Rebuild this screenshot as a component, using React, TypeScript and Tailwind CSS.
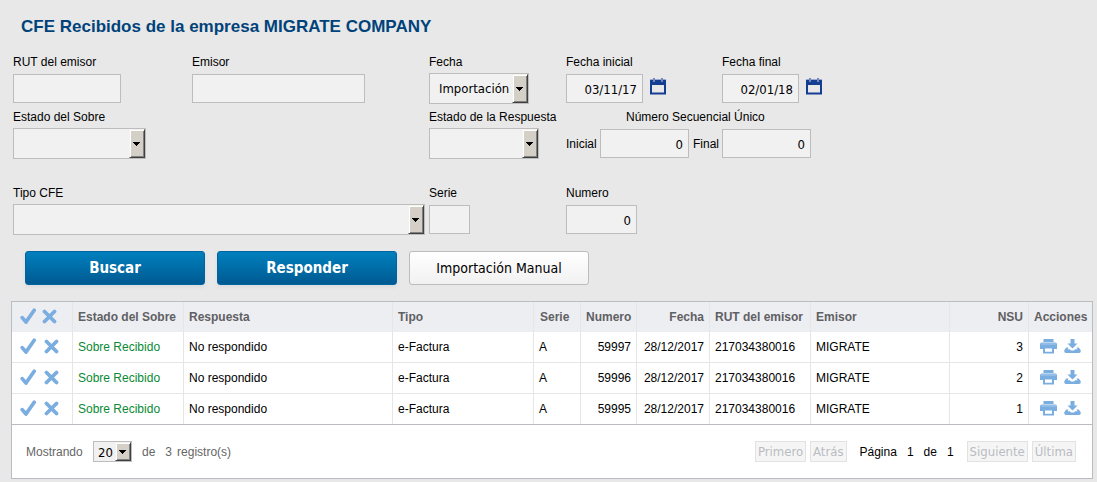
import type { ReactNode } from "react";

const formFont = "font-['Tahoma','DejaVu_Sans_Condensed','Noto_Sans',sans-serif]";
const inputStyle =
  "block h-[29px] border border-[#bdbdbd] bg-[#f1f1f1] px-[5px] pt-px text-[13px] text-black outline-none";

function Field({ id, label, className = "", children }: { id: string; label: string; className?: string; children: ReactNode }) {
  return (
    <div className={className}>
      <label htmlFor={id} className="block h-5 whitespace-nowrap leading-[18px]">
        {label}
      </label>
      <div className="flex h-[31px] items-center">{children}</div>
    </div>
  );
}

function Arrow() {
  return (
    <span className="pointer-events-none absolute inset-y-px right-px flex w-4 items-center justify-center border border-t-[#f4f2ee] border-l-[#f4f2ee] border-r-[#404040] border-b-[#404040] bg-[#d4d0c8] pr-px shadow-[inset_1px_1px_0_#ffffff,inset_-1px_-1px_0_#808080]">
      <svg width="7" height="4" viewBox="0 0 7 4" shapeRendering="crispEdges">
        <path d="M0 0h7v1H6v1H5v1H4v1H3V3H2V2H1V1H0z" fill="#000" />
      </svg>
    </span>
  );
}

function Select({ id, options, className, label }: { id: string; options: string[]; className: string; label?: string }) {
  return (
    <span className={`relative block ${className}`}>
      <select
        id={id}
        aria-label={label}
        className={`${formFont} block h-full w-full appearance-none rounded-none border border-[#bdbdbd] bg-[#f1f1f1] pt-px pr-4 text-[13px] text-black outline-none ${label ? "pl-1" : "pl-[9px]"}`}
      >
        {options.map((o) => (
          <option key={o}>{o}</option>
        ))}
      </select>
      <Arrow />
    </span>
  );
}

function CalendarButton({ label }: { label: string }) {
  return (
    <button type="button" aria-label={label} className="ml-[7px] -mt-1">
      <svg width="16" height="17" viewBox="0 0 16 17" className="block">
        <path d="M0 2h16v14.5H0zM2 7v7.5h12V7z" fill="#153d92" fillRule="evenodd" />
        <path d="M0 1h16v1H0z" fill="#9aa9cc" />
        <path d="M3 0h2v4H3zM11 0h2v4h-2z" fill="#7489bd" />
      </svg>
    </button>
  );
}

function CheckIcon() {
  return (
    <svg width="17" height="17" viewBox="0 0 17 17" className="block">
      <path d="M2.2 9.6 6 14 14.2 2.2" fill="none" stroke="#7aade0" strokeWidth="3.7" strokeLinecap="round" strokeLinejoin="round" />
    </svg>
  );
}

function CrossIcon() {
  return (
    <svg width="15" height="15" viewBox="0 0 15 15" className="block">
      <path d="M2.5 2.5 12.5 12.5M12.5 2.5 2.5 12.5" fill="none" stroke="#7aade0" strokeWidth="3.8" strokeLinecap="round" />
    </svg>
  );
}

function PrintIcon() {
  return (
    <svg width="17" height="15" viewBox="0 0 17 15" className="block">
      <path d="M3.5 0h10v3h-10z" fill="#7aade0" />
      <path d="M1.8 3.6h13.4Q17 3.8 17 5.5V10h-3V8H3v2H0V5.5Q0 3.8 1.8 3.6z" fill="#7aade0" />
      <path d="M.8 4.4h15.4v1.1H.8z" fill="#a5c9ec" />
      <path d="M3 8h11v6.5H3zM5 9.5v3.3h7V9.5z" fill="#7aade0" fillRule="evenodd" />
    </svg>
  );
}

function DownloadIcon() {
  return (
    <svg width="17" height="15" viewBox="0 0 17 15" className="block">
      <path d="M6.5 0h4v4.500h3L8.500 9.500 3.500 4.500h3z" fill="#7aade0" />
      <path d="M2.2 8.5 1 10.300Q.2 11 .2 12q0 2 1.800 2h13q1.800 0 1.800-2 0-1-.8-1.700L14.800 8.500h-2.300l1 1.800h-2.300l-1.200 1.300H7l-1.200-1.300H3.500l1-1.800z" fill="#7aade0" />
    </svg>
  );
}

function Marks({ header = false }: { header?: boolean }) {
  return (
    <div className={`flex items-center pb-[2px] pl-2 ${header ? "gap-[5px]" : "gap-[7px]"}`}>
      <button type="button" aria-label={header ? "Marcar todos" : "Marcar"}>
        <CheckIcon />
      </button>
      <button type="button" aria-label={header ? "Desmarcar todos" : "Desmarcar"}>
        <CrossIcon />
      </button>
    </div>
  );
}

function PageButton({ children }: { children: ReactNode }) {
  return (
    <button
      type="button"
      disabled
      className={`${formFont} h-[21px] border border-[#e2e2e2] bg-[#f5f5f5] px-[2px] pt-px text-[13px] leading-4 text-[#b9bcc2]`}
    >
      {children}
    </button>
  );
}

const rows = [
  { numero: "59997", nsu: 3 },
  { numero: "59996", nsu: 2 },
  { numero: "59995", nsu: 1 },
];

const th = "border-r border-[#e6e6e6] px-[5px] font-bold whitespace-nowrap";
const td = "border-r border-[#e6e6e6] px-[5px] whitespace-nowrap";

export default function App() {
  return (
    <main className="min-h-screen bg-[#e8e8e8] pt-[17px] pr-1 pb-[3px] pl-[11px] font-['Liberation_Sans',Arial,sans-serif] text-[12px] text-black">
      <h1 className="pl-[10px] text-[17px] leading-5 font-bold text-[#00437a]">CFE Recibidos de la empresa MIGRATE COMPANY</h1>

      <form className="pl-[2px]" onSubmit={(e) => e.preventDefault()}>
        <div className="mt-4 grid grid-cols-[179px_237px_137px_156px_1fr] gap-y-1">
          <Field id="rut" label="RUT del emisor">
            <input id="rut" className={`${inputStyle} ${formFont} w-[108px]`} />
          </Field>
          <Field id="emisor" label="Emisor">
            <input id="emisor" className={`${inputStyle} ${formFont} w-[173px]`} />
          </Field>
          <Field id="fecha" label="Fecha">
            <Select id="fecha" options={["Importación", "Emisión"]} className="h-[31px] w-[100px]" />
          </Field>
          <Field id="fini" label="Fecha inicial">
            <input id="fini" defaultValue="03/11/17" className={`${inputStyle} ${formFont} w-[77px] text-right`} />
            <CalendarButton label="Elegir fecha inicial" />
          </Field>
          <Field id="ffin" label="Fecha final">
            <input id="ffin" defaultValue="02/01/18" className={`${inputStyle} ${formFont} w-[77px] text-right`} />
            <CalendarButton label="Elegir fecha final" />
          </Field>

          <Field id="esobre" label="Estado del Sobre" className="col-span-2">
            <Select id="esobre" options={[""]} className="h-[31px] w-[133px]" />
          </Field>
          <Field id="eresp" label="Estado de la Respuesta">
            <Select id="eresp" options={[""]} className="h-[31px] w-[110px]" />
          </Field>
          <fieldset className="col-span-2">
            <legend className="block h-5 pl-[60px] leading-[18px]">Número Secuencial Único</legend>
            <div className="flex h-[31px] items-center">
              <label htmlFor="nsui" className="w-[34px]">Inicial</label>
              <input id="nsui" defaultValue="0" className={`${inputStyle} ${formFont} w-[89px] text-right`} />
              <label htmlFor="nsuf" className="w-[33px] pl-1">Final</label>
              <input id="nsuf" defaultValue="0" className={`${inputStyle} ${formFont} w-[89px] text-right`} />
            </div>
          </fieldset>

          <Field id="tipo" label="Tipo CFE" className="col-span-2 mt-[21px]">
            <Select id="tipo" options={[""]} className="h-[31px] w-[412px]" />
          </Field>
          <Field id="serie" label="Serie" className="mt-[21px]">
            <input id="serie" className={`${inputStyle} ${formFont} w-[41px]`} />
          </Field>
          <Field id="numero" label="Numero" className="mt-[21px]">
            <input id="numero" defaultValue="0" className={`${inputStyle} ${formFont} w-[71px] text-right`} />
          </Field>
        </div>

        <div className={`${formFont} mt-4 flex gap-3 pl-3`}>
          <button type="submit" className="h-[34px] w-[180px] rounded-[3px] border border-[#00659f] bg-linear-to-b from-[#0080bd] to-[#005a92] pt-px text-[15px] font-bold text-white shadow-[0_2px_4px_#dcdcdc]">
            Buscar
          </button>
          <button type="button" className="h-[34px] w-[180px] rounded-[3px] border border-[#00659f] bg-linear-to-b from-[#0080bd] to-[#005a92] pt-px text-[15px] font-bold text-white shadow-[0_2px_4px_#dcdcdc]">
            Responder
          </button>
          <button type="button" className="h-[34px] w-[180px] rounded-[3px] border border-[#bcbcbc] bg-linear-to-b from-white to-[#f1f1f1] pt-px text-[14px] text-black">
            Importación Manual
          </button>
        </div>
      </form>

      <section className="mt-4 border border-[#b9bdc1] bg-white">
        <table className="w-full table-fixed border-separate border-spacing-0">
          <colgroup>
            <col className="w-[61px]" />
            <col className="w-[111px]" />
            <col />
            <col className="w-[141px]" />
            <col className="w-[47px]" />
            <col className="w-[56px]" />
            <col className="w-[73px]" />
            <col className="w-[101px]" />
            <col className="w-[139px]" />
            <col className="w-[79px]" />
            <col className="w-[63px]" />
          </colgroup>
          <thead>
            <tr className="h-[30px] bg-[#edeef2] text-left text-[#5f6063]">
              <th className="border-r border-[#e6e6e6]"><Marks header /></th>
              <th className={th}>Estado del Sobre</th>
              <th className={th}>Respuesta</th>
              <th className={th}>Tipo</th>
              <th className={`${th} pl-[6px]`}>Serie</th>
              <th className={`${th} text-right`}>Numero</th>
              <th className={`${th} text-right`}>Fecha</th>
              <th className={th}>RUT del emisor</th>
              <th className={th}>Emisor</th>
              <th className={`${th} text-right`}>NSU</th>
              <th className="pl-[5px] font-bold">Acciones</th>
            </tr>
          </thead>
          <tbody className="[&>tr:not(:last-child)>td]:border-b">
            {rows.map((r) => (
              <tr key={r.numero} className="h-[31px] last:h-[30px]">
                <td className="border-r border-[#e6e6e6]"><Marks /></td>
                <td className={`${td} text-[#0a8a35]`}>Sobre Recibido</td>
                <td className={td}>No respondido</td>
                <td className={td}>e-Factura</td>
                <td className={td}>A</td>
                <td className={`${td} text-right`}>{r.numero}</td>
                <td className={`${td} text-right`}>28/12/2017</td>
                <td className={td}>217034380016</td>
                <td className={td}>MIGRATE</td>
                <td className={`${td} text-right`}>{r.nsu}</td>
                <td className="border-[#e6e6e6]">
                  <div className="flex items-center gap-[7px] pb-[2px] pl-[11px]">
                    <button type="button" aria-label="Imprimir"><PrintIcon /></button>
                    <button type="button" aria-label="Descargar"><DownloadIcon /></button>
                  </div>
                </td>
              </tr>
            ))}
          </tbody>
        </table>
        <footer className="flex h-[54px] items-center justify-between border-t border-[#b9bdc1] pr-4 pl-[14px]">
          <div className="flex items-center text-[#666666]">
            <span className="w-[67px]">Mostrando</span>
            <Select id="page-size" label="Registros por página" options={["20", "50"]} className="h-[21px] w-[39px]" />
            <span className="ml-[10px]">de</span>
            <span className="ml-[10px]">3</span>
            <span className="ml-[5px]">registro(s)</span>
          </div>
          <div className="flex items-center">
            <div className="flex gap-1">
              <PageButton>Primero</PageButton>
              <PageButton>Atrás</PageButton>
            </div>
            <div className="mx-[13px] flex gap-[10px]">
              <span>Página</span>
              <span>1</span>
              <span>de</span>
              <span>1</span>
            </div>
            <div className="flex gap-1">
              <PageButton>Siguiente</PageButton>
              <PageButton>Última</PageButton>
            </div>
          </div>
        </footer>
      </section>
    </main>
  );
}
